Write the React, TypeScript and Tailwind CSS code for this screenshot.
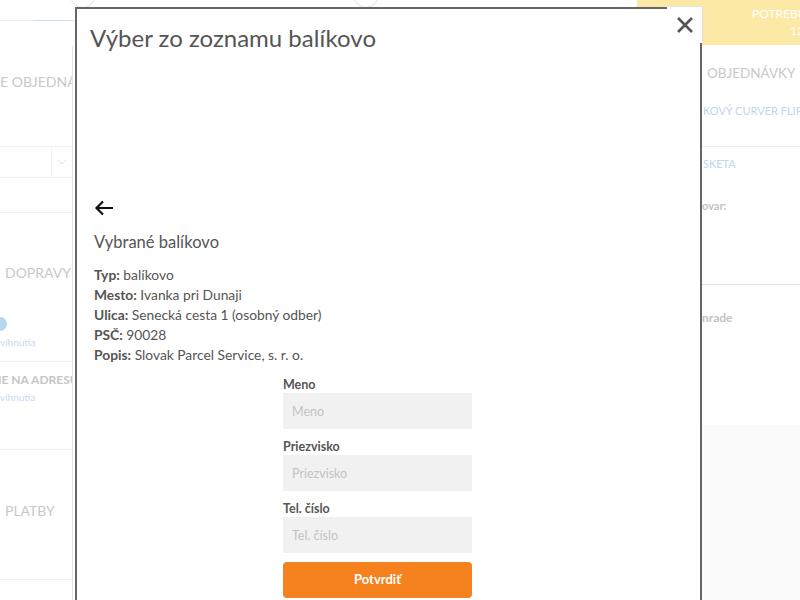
import React from "react";

const font = { fontFamily: "Lato, 'Noto Sans', sans-serif" };

const details = [
  { label: "Typ:", value: "balíkovo" },
  { label: "Mesto:", value: "Ivanka pri Dunaji" },
  { label: "Ulica:", value: "Senecká cesta 1 (osobný odber)" },
  { label: "PSČ:", value: "90028" },
  { label: "Popis:", value: "Slovak Parcel Service, s. r. o." },
];

const fields = ["Meno", "Priezvisko", "Tel. číslo"];

function Background() {
  return (
    <div className="flex h-full w-full flex-col bg-white">
      <div className="flex h-[45px] shrink-0">
        <div className="flex-1">
          <div className="relative flex h-[21px] items-end border-b border-[#eaeef2]">
            <div className="absolute left-[33px] bottom-[-1px] h-px w-[40px] bg-[#c9e0f2]" />
            <div className="absolute left-[70px] top-[-18px] flex items-center gap-2">
              <div className="flex h-[26px] w-[26px] items-center justify-center rounded-full border border-[#dde3e8] text-[12px] text-[#ccd5dd]">2</div>
              <span className="text-[13px] uppercase text-[#ccd5dd]">Summary order</span>
            </div>
            <div className="absolute left-[353px] top-[-18px] flex items-center gap-2">
              <div className="flex h-[26px] w-[26px] items-center justify-center rounded-full border border-[#dde3e8] text-[12px] text-[#ccd5dd]">3</div>
              <span className="text-[13px] uppercase text-[#ccd5dd]">Kontakt a adresa</span>
            </div>
          </div>
        </div>
        <div className="flex w-[163px] flex-col overflow-hidden whitespace-nowrap bg-[#fde9a6] pl-[115px] pt-[5px] text-[12px] leading-[17px] text-white">
          <span>POTREBUJETE</span>
          <span className="pl-[38px]">12</span>
        </div>
      </div>

      <div className="flex flex-1">
        <div className="w-[73px] shrink-0 overflow-hidden whitespace-nowrap border-r border-[#e6e6e6]">
          <div className="h-[102px] border-b border-[#f0f0f0] pt-[28px] text-[14px] leading-[18px] text-[#c8c8c8]">E OBJEDNÁVKY</div>
          <div className="flex h-[31px] justify-end border-b border-[#f0f0f0]">
            <div className="flex w-[21px] items-center justify-center border-l border-[#f3f3f3]">
              <svg width="10" height="6" viewBox="0 0 10 6"><path d="M1 1l4 4 4-4" fill="none" stroke="#dcdcdc" strokeWidth="1" /></svg>
            </div>
          </div>
          <div className="h-[35px] border-b border-[#f0f0f0]" />
          <div className="flex h-[149px] flex-col border-b border-[#f0f0f0]">
            <div className="pl-[5px] pt-[51px] text-[14px] leading-[18px] text-[#c8c8c8]">DOPRAVY</div>
            <div className="ml-[-7px] mt-[35px] h-[14px] w-[14px] rounded-full bg-[#b8d6f0]" />
            <div className="mt-[5px] text-[10px] leading-[12px] text-[#c5dcef]">vihnutia</div>
          </div>
          <div className="flex h-[88px] flex-col border-b border-[#f0f0f0]">
            <div className="ml-[-2px] pt-[10px] text-[12px] font-bold leading-[16px] text-[#c6c6c6]">IE NA ADRESU</div>
            <div className="mt-[3px] text-[10px] leading-[12px] text-[#c5dcef]">vihnutia</div>
          </div>
          <div className="h-[130px] border-b border-[#f0f0f0] pl-[5px] pt-[52px] text-[14px] leading-[18px] text-[#c8c8c8]">PLATBY</div>
        </div>

        <div className="flex-1" />

        <div className="flex w-[100px] shrink-0 flex-col overflow-hidden whitespace-nowrap">
          <div className="h-[102px] border-b border-[#eeeeee]">
            <div className="pl-[7px] pt-[19px] text-[13.5px] leading-[18px] text-[#c8c8c8]">OBJEDNÁVKY</div>
            <div className="pl-[3px] pt-[22px] text-[11px] leading-[14px] text-[#bcd7ee]">KOVÝ CURVER FLIPER</div>
          </div>
          <div className="h-[138px] border-b border-[#dfe3e6]">
            <div className="pl-[3px] pt-[10px] text-[11px] leading-[14px] text-[#bcd7ee]">SKETA</div>
            <div className="pl-[2px] pt-[28px] text-[11px] font-bold leading-[14px] text-[#c3c3c3]">ovar:</div>
          </div>
          <div className="h-[140px]">
            <div className="pl-[2px] pt-[25px] text-[12px] font-bold leading-[16px] text-[#c3c3c3]">nrade</div>
          </div>
          <div className="flex-1 bg-[#fafafa]" />
        </div>
      </div>
    </div>
  );
}

function Modal() {
  return (
    <div className="absolute left-[75px] top-[7px] h-[610px] w-[627px] border-2 border-[#666] bg-white">
      <button className="absolute right-[-3px] top-[-3px] flex h-[37px] w-[36px] items-center justify-center border-r border-t border-[#e2e2e2] bg-white">
        <svg width="18" height="18" viewBox="0 0 18 18">
          <path d="M2 2l14 14M16 2L2 16" stroke="#555" strokeWidth="2.6" />
        </svg>
      </button>

      <div className="px-[13px] pt-[14px]">
        <h1 className="text-[24px] leading-[30px] text-[#555]">Výber zo zoznamu balíkovo</h1>
      </div>

      <div className="h-[147px]" />

      <div className="px-[17px]">
        <svg width="20" height="16" viewBox="0 0 20 16">
          <path d="M19 8H2.5M9 1.5L2.5 8 9 14.5" fill="none" stroke="#111" strokeWidth="2.2" />
        </svg>
        <h2 className="mt-[16px] text-[16.5px] leading-[20px] text-[#555]">Vybrané balíkovo</h2>
        <div className="mt-[13px] text-[13.8px] leading-[20px] text-[#555]">
          {details.map((d) => (
            <div key={d.label}>
              <span className="font-bold">{d.label}</span> {d.value}
            </div>
          ))}
        </div>

        <div className="ml-[189px] mt-[12px] flex w-[189px] flex-col">
          {fields.map((f, i) => (
            <div key={f} className={i === 0 ? "" : "mt-[10px]"}>
              <label className="block text-[12.5px] font-bold leading-[16px] text-[#555]">{f}</label>
              <input
                placeholder={f}
                className="block h-[36px] w-full bg-[#f1f1f1] px-[9px] text-[12.5px] text-[#555] outline-none placeholder:text-[#c3c3c3]"
                style={font}
              />
            </div>
          ))}
          <button className="mt-[9px] h-[36px] w-full rounded-[4px] bg-[#f5821f] text-[13px] font-bold text-white" style={font}>
            Potvrdiť
          </button>
        </div>
      </div>
    </div>
  );
}

export default function App() {
  return (
    <div className="relative h-[600px] w-[800px] overflow-hidden" style={font}>
      <Background />
      <Modal />
    </div>
  );
}
